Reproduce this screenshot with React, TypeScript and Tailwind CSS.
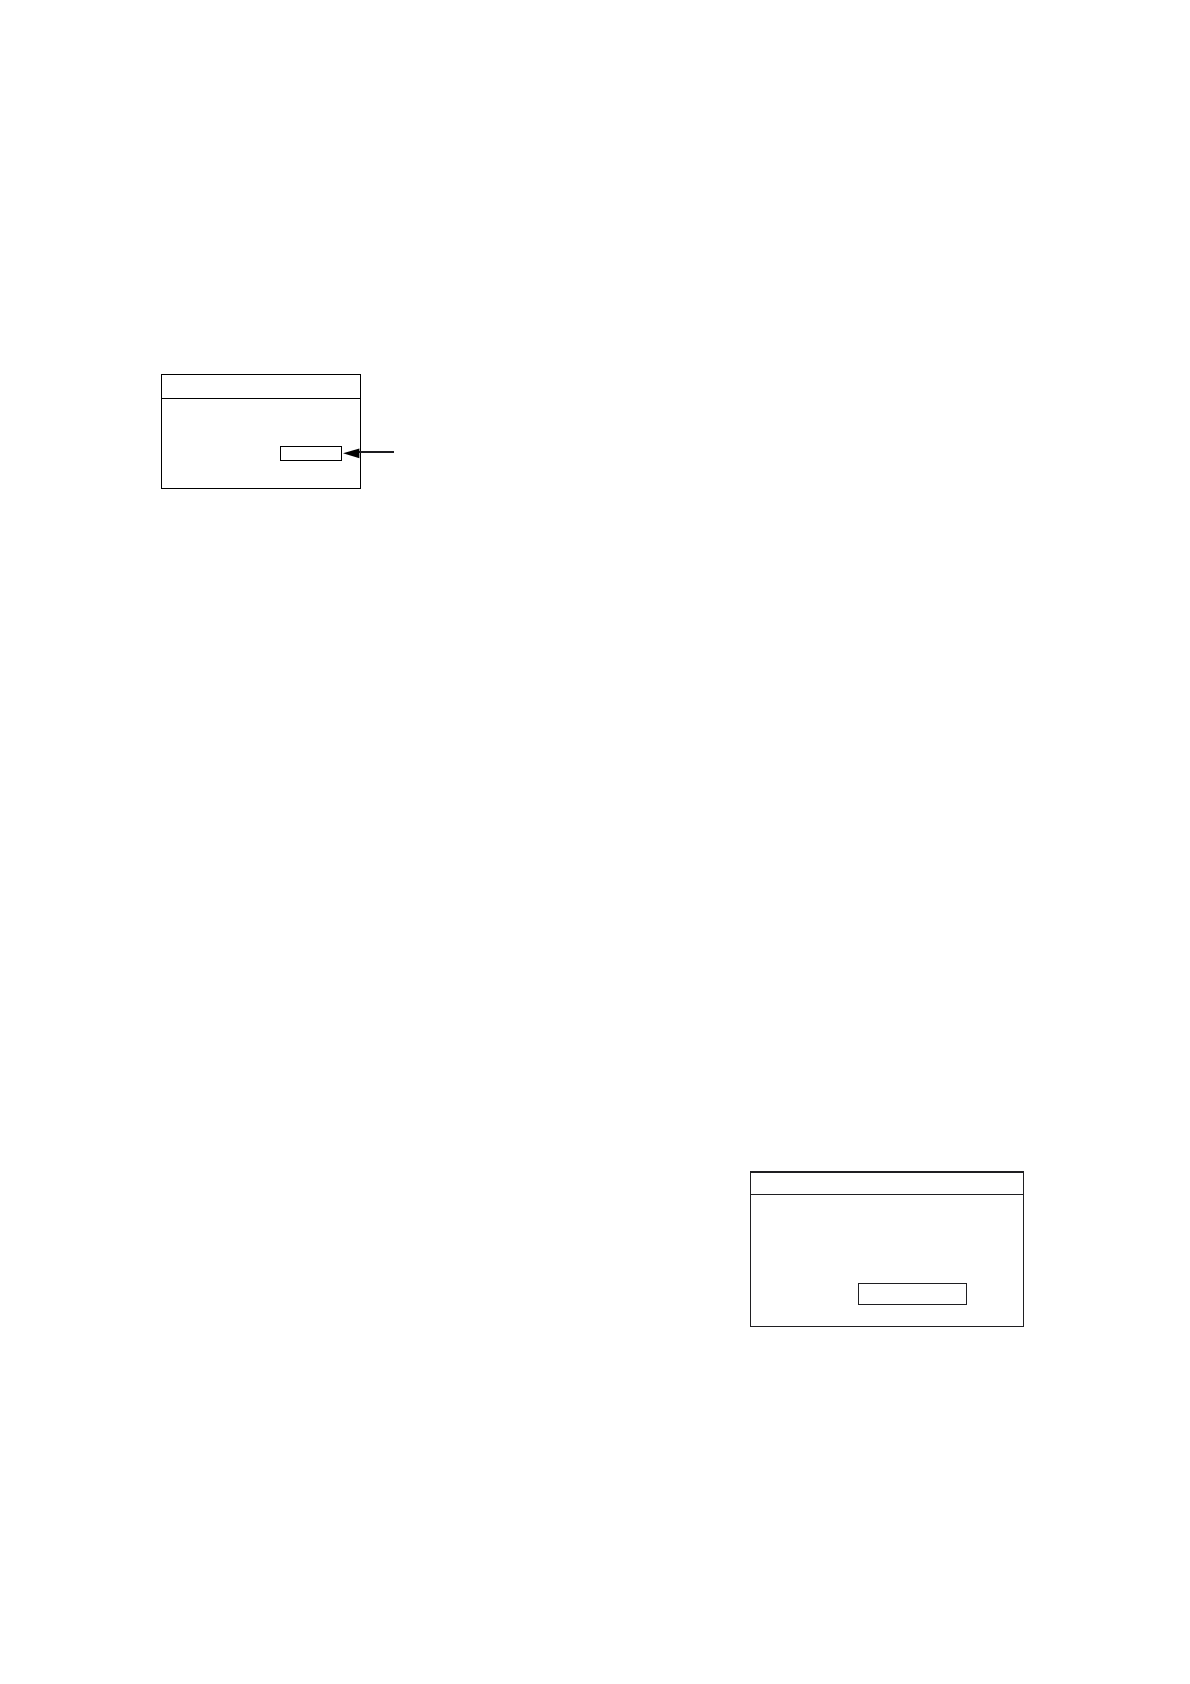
function Arrow() {
  return (
    <svg
      className="pointer-events-none absolute inset-y-0 left-full my-auto max-w-none"
      width="52"
      height="11"
      viewBox="0 0 52 11"
      aria-hidden="true"
    >
      <path d="M17 3h35v2H17z" fill="#1c1c20" />
      <path d="M1 5.3 17.4 0.4V10.2Z" fill="#000" />
    </svg>
  );
}

function FirstDialog() {
  return (
    <section className="w-[200px] border border-black">
      <header className="h-6 border-b border-black" />
      <div className="flex justify-end pt-[47px] pr-[18px] pb-[27px]">
        <div className="relative flex">
          <input
            type="text"
            aria-label="Value"
            className="h-[15px] w-[62px] border border-black bg-white px-1 text-xs outline-none"
          />
          <Arrow />
        </div>
      </div>
    </section>
  );
}

function SecondDialog() {
  return (
    <section className="w-[274px] border border-t-2 border-[#1f1f22]">
      <header className="h-[22px] border-b border-[#1f1f22]" />
      <div className="flex justify-end pt-[88px] pr-14 pb-[21px]">
        <input
          type="text"
          aria-label="Entry"
          className="h-[22px] w-[109px] border border-[#1f1f22] bg-white px-1 text-sm outline-none"
        />
      </div>
    </section>
  );
}

export default function App() {
  return (
    <main className="flex min-h-screen flex-col bg-white pt-[374px] pr-[166px] pb-[357px] pl-[161px] font-['Liberation_Sans',sans-serif]">
      <div className="flex justify-start pb-[682px]">
        <FirstDialog />
      </div>
      <div className="flex justify-end">
        <SecondDialog />
      </div>
    </main>
  );
}
